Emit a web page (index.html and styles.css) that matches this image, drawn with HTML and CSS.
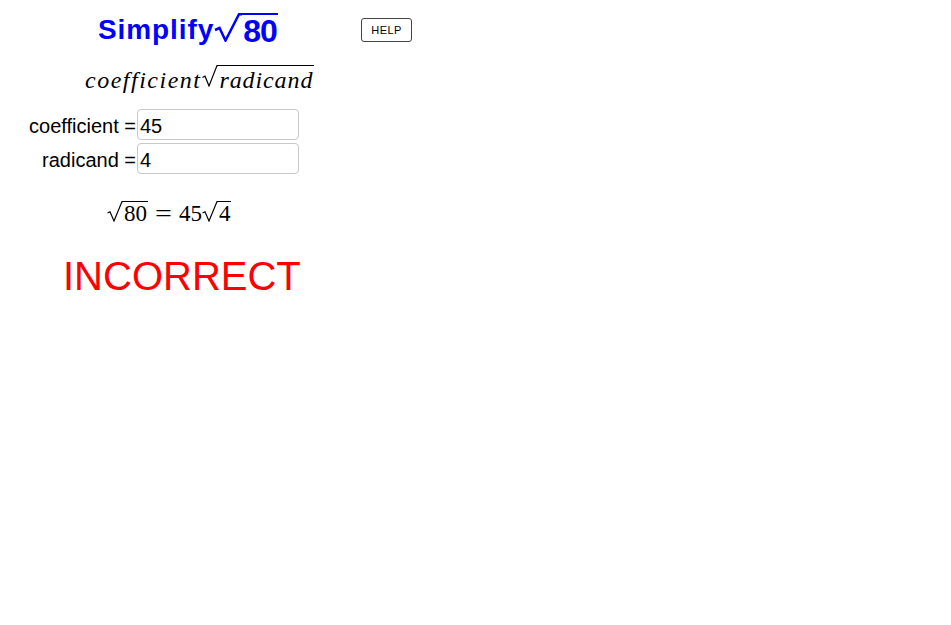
FILE: index.html
```html
<!DOCTYPE html>
<html>
<head>
<meta charset="utf-8">
<link rel="stylesheet" href="styles.css">
</head>
<body>
<div class="app">
  <div class="top-row">
    <div class="title">
      <span class="title-word">Simplify</span><span class="rad rad-title"><svg class="hook" width="28" height="29" viewBox="0 0 28 29"><path d="M1 17 L5.5 15 L11.5 27.5 L25 1.2 L28 1.2" fill="none" stroke="#0000ff" stroke-width="2.5"/></svg><span class="under under-title">80</span></span>
    </div>
    <button class="help">HELP</button>
  </div>

  <div class="formula">
    <span class="it it-coef">coefficient</span><span class="rad"><svg class="hook" width="16" height="22" viewBox="0 0 16 22"><path d="M0.5 12.5 L3 11.2 L7 21 L15 0.6 L16 0.6" fill="none" stroke="#000" stroke-width="1.2"/></svg><span class="under under-formula it">radicand</span></span>
  </div>

  <div class="fields">
    <div class="field">
      <label class="lbl">coefficient =</label>
      <div class="box">45</div>
    </div>
    <div class="field">
      <label class="lbl">radicand =</label>
      <div class="box">4</div>
    </div>
  </div>

  <div class="equation">
    <span class="rad"><svg class="hook" width="16" height="21" viewBox="0 0 16 21"><path d="M0.5 12 L3 10.8 L7 20 L15 0.6 L16 0.6" fill="none" stroke="#000" stroke-width="1.2"/></svg><span class="under under-eq">80</span></span><span class="plain eqsign">=</span><span class="plain">45</span><span class="rad"><svg class="hook" width="16" height="21" viewBox="0 0 16 21"><path d="M0.5 12 L3 10.8 L7 20 L15 0.6 L16 0.6" fill="none" stroke="#000" stroke-width="1.2"/></svg><span class="under under-eq">4</span></span>
  </div>

  <div class="result">INCORRECT</div>
</div>
</body>
</html>
```

FILE: styles.css
```css
html, body {
  margin: 0;
  padding: 0;
  background: #ffffff;
}
.app {
  width: 951px;
  height: 625px;
  font-family: "Liberation Sans", Arial, sans-serif;
  color: #000;
}
.top-row {
  display: flex;
  align-items: flex-start;
  box-sizing: border-box;
  height: 65px;
  padding-top: 13px;
  padding-left: 98px;
}
.title {
  display: flex;
  align-items: flex-start;
  width: 263px;
  flex: none;
  color: #0000ff;
  font-weight: bold;
}
.title-word {
  display: block;
  margin-top: 3px;
  font-size: 28px;
  line-height: 28px;
  letter-spacing: 0.9px;
}
.rad {
  display: flex;
  align-items: flex-start;
}
.hook {
  display: block;
  flex: none;
}
.under {
  display: block;
}
.rad-title {
  margin-left: 0;
}
.under-title {
  border-top: 2.5px solid #0000ff;
  padding: 1.5px 1px 0 1px;
  font-size: 32px;
  line-height: 28px;
  letter-spacing: -1px;
}
.help {
  margin-top: 5px;
  width: 51px;
  height: 24px;
  padding: 0;
  border: 1px solid #444;
  border-radius: 3px;
  background: #fff;
  font-family: "Liberation Sans", Arial, sans-serif;
  font-size: 11px;
  letter-spacing: 0.4px;
  color: #000;
}
.formula {
  display: flex;
  align-items: flex-start;
  box-sizing: border-box;
  height: 27px;
  padding-left: 85px;
  font-family: "Liberation Serif", "Times New Roman", serif;
  font-size: 24px;
  line-height: 24px;
}
.it {
  font-style: italic;
}
.it-coef {
  margin-top: 3px;
  letter-spacing: 1.5px;
  margin-right: 1px;
}
.under-formula {
  border-top: 1px solid #000;
  padding: 2px 1px 0 1px;
  letter-spacing: 0.9px;
}
.fields {
  margin-top: 17px;
  display: flex;
  flex-direction: column;
  gap: 3px;
}
.field {
  display: flex;
  align-items: baseline;
}
.lbl {
  width: 137px;
  box-sizing: border-box;
  padding-right: 1px;
  text-align: right;
  font-size: 20px;
  line-height: 27px;
}
.box {
  width: 162px;
  height: 31px;
  box-sizing: border-box;
  border: 1px solid #c8c8c8;
  border-radius: 4px;
  font-size: 20px;
  line-height: 27px;
  padding: 3px 0 0 2px;
}
.equation {
  display: flex;
  align-items: flex-start;
  box-sizing: border-box;
  height: 24px;
  margin-top: 27px;
  padding-left: 107px;
  font-family: "Liberation Serif", "Times New Roman", serif;
  font-size: 23px;
  line-height: 23px;
}
.under-eq {
  border-top: 1px solid #000;
  padding: 0 1px 0 1px;
}
.plain {
  display: block;
  margin-top: 1px;
}
.eqsign {
  margin-left: 9px;
  margin-right: 9px;
  transform: scaleX(1.3);
}
.result {
  margin-top: 28px;
  padding-left: 63px;
  color: #ff0000;
  font-size: 40px;
  line-height: 46px;
}
```
